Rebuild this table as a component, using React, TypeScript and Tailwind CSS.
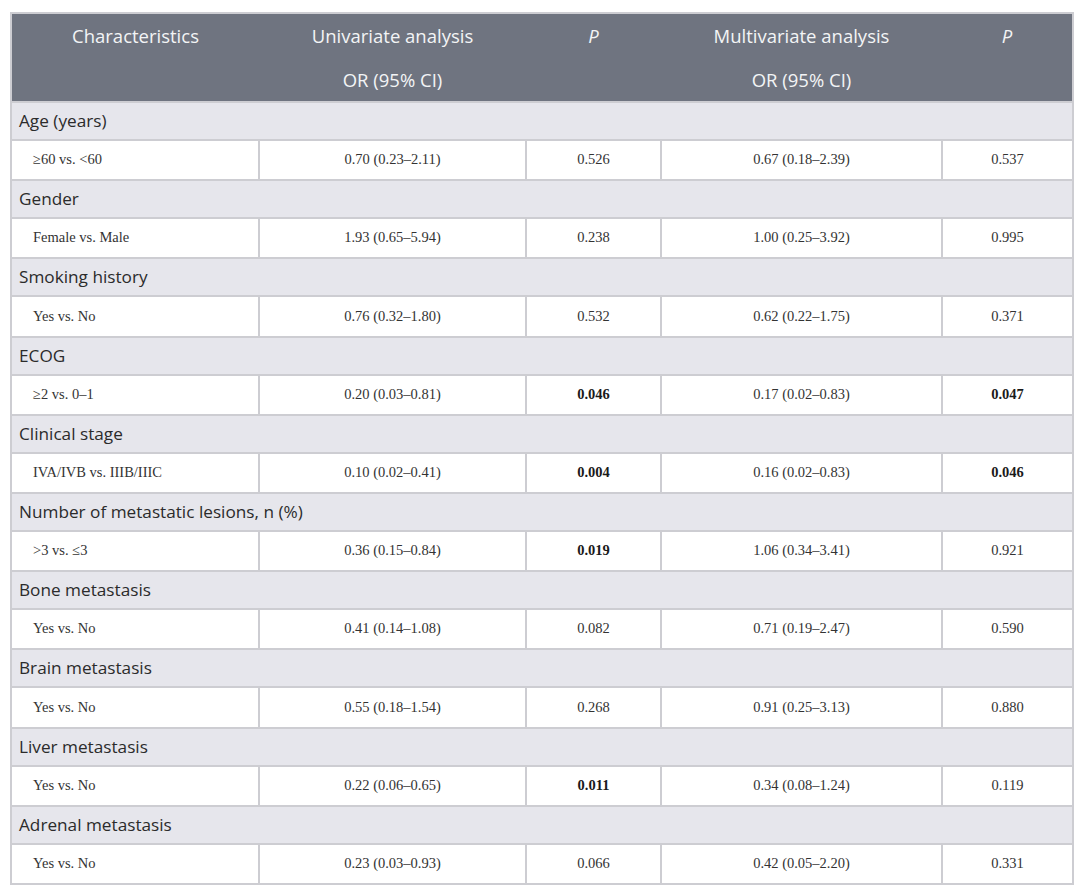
import React from "react";

type Row = {
  group: string;
  label: string;
  uni: string;
  p1: string;
  p1b?: boolean;
  multi: string;
  p2: string;
  p2b?: boolean;
};

const rows: Row[] = [
  { group: "Age (years)", label: "≥60 vs. <60", uni: "0.70 (0.23–2.11)", p1: "0.526", multi: "0.67 (0.18–2.39)", p2: "0.537" },
  { group: "Gender", label: "Female vs. Male", uni: "1.93 (0.65–5.94)", p1: "0.238", multi: "1.00 (0.25–3.92)", p2: "0.995" },
  { group: "Smoking history", label: "Yes vs. No", uni: "0.76 (0.32–1.80)", p1: "0.532", multi: "0.62 (0.22–1.75)", p2: "0.371" },
  { group: "ECOG", label: "≥2 vs. 0–1", uni: "0.20 (0.03–0.81)", p1: "0.046", p1b: true, multi: "0.17 (0.02–0.83)", p2: "0.047", p2b: true },
  { group: "Clinical stage", label: "IVA/IVB vs. IIIB/IIIC", uni: "0.10 (0.02–0.41)", p1: "0.004", p1b: true, multi: "0.16 (0.02–0.83)", p2: "0.046", p2b: true },
  { group: "Number of metastatic lesions, n (%)", label: ">3 vs. ≤3", uni: "0.36 (0.15–0.84)", p1: "0.019", p1b: true, multi: "1.06 (0.34–3.41)", p2: "0.921" },
  { group: "Bone metastasis", label: "Yes vs. No", uni: "0.41 (0.14–1.08)", p1: "0.082", multi: "0.71 (0.19–2.47)", p2: "0.590" },
  { group: "Brain metastasis", label: "Yes vs. No", uni: "0.55 (0.18–1.54)", p1: "0.268", multi: "0.91 (0.25–3.13)", p2: "0.880" },
  { group: "Liver metastasis", label: "Yes vs. No", uni: "0.22 (0.06–0.65)", p1: "0.011", p1b: true, multi: "0.34 (0.08–1.24)", p2: "0.119" },
  { group: "Adrenal metastasis", label: "Yes vs. No", uni: "0.23 (0.03–0.93)", p1: "0.066", multi: "0.42 (0.05–2.20)", p2: "0.331" },
];

const sans = "font-['Open_Sans','Noto_Sans',sans-serif]";
const serif = "font-['Liberation_Serif','Times_New_Roman',serif]";

export default function App() {
  return (
    <div className="bg-white w-[1080px] h-[891px] pt-[12px] pl-[10px]">
      <table className="table-fixed border-collapse w-[1062px] border-2 border-[#cdcdd2]">
        <colgroup>
          <col className="w-[248px]" />
          <col className="w-[267px]" />
          <col className="w-[135px]" />
          <col className="w-[281px]" />
          <col className="w-[131px]" />
        </colgroup>
        <thead>
          <tr className={`bg-[#6f7480] text-[#f3f4f6] text-[18.5px] ${sans} h-[89px]`}>
            <th className="font-normal align-top pt-[8px] leading-[28px]">Characteristics</th>
            <th className="font-normal align-top pt-[8px]">
              <div className="leading-[28px]">Univariate analysis</div>
              <div className="leading-[28px] mt-[16px]">OR (95% CI)</div>
            </th>
            <th className="font-normal italic align-top pt-[8px] leading-[28px]">P</th>
            <th className="font-normal align-top pt-[8px]">
              <div className="leading-[28px]">Multivariate analysis</div>
              <div className="leading-[28px] mt-[16px]">OR (95% CI)</div>
            </th>
            <th className="font-normal italic align-top pt-[8px] leading-[28px]">P</th>
          </tr>
        </thead>
        <tbody>
          {rows.map((r) => (
            <React.Fragment key={r.group}>
              <tr className="bg-[#e6e6ec] h-[38px]">
                <td colSpan={5} className={`border-y-2 border-[#cdcdd2] pl-[7px] text-[17.2px] text-[#2b2b2b] ${sans}`}>
                  {r.group}
                </td>
              </tr>
              <tr className={`bg-white h-[40.2px] text-[14.5px] text-[#333333] ${serif}`}>
                <td className="border-2 border-[#cdcdd2] pl-[21px]">{r.label}</td>
                <td className="border-2 border-[#cdcdd2] text-center">{r.uni}</td>
                <td className={`border-2 border-[#cdcdd2] text-center ${r.p1b ? "font-bold text-[#1a1a1a]" : ""}`}>{r.p1}</td>
                <td className="border-2 border-[#cdcdd2] text-center">{r.multi}</td>
                <td className={`border-2 border-[#cdcdd2] text-center ${r.p2b ? "font-bold text-[#1a1a1a]" : ""}`}>{r.p2}</td>
              </tr>
            </React.Fragment>
          ))}
        </tbody>
      </table>
    </div>
  );
}
